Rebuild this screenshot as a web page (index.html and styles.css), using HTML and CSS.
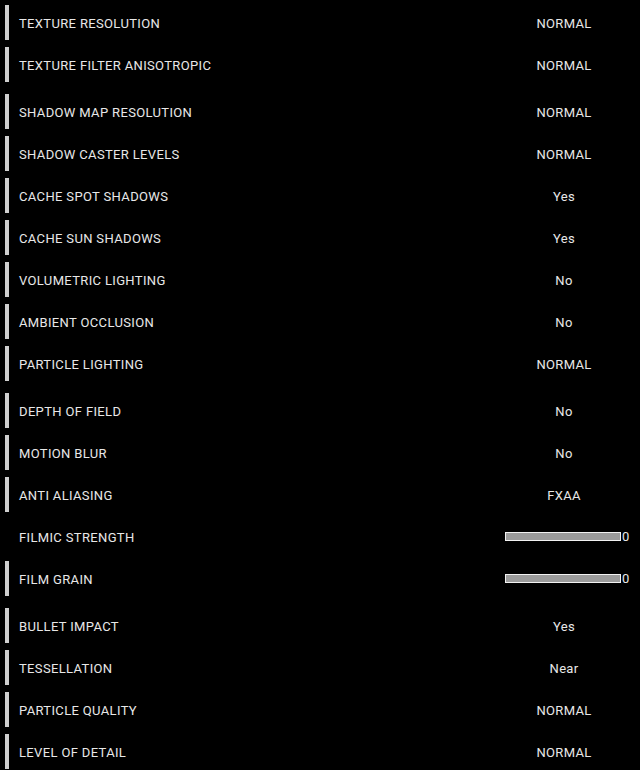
FILE: index.html
```html
<!DOCTYPE html>
<html lang="en">

<head>
	<meta charset="UTF-8">
	<meta name="viewport" content="width=device-width, initial-scale=1.0">
	<title>Graphics Settings</title>
	<link rel="stylesheet" href="styles.css">
</head>

<body>
	<div class="settings">
		<div class="row"><span class="label">TEXTURE RESOLUTION</span><span class="value">NORMAL</span></div>
		<div class="row"><span class="label">TEXTURE FILTER ANISOTROPIC</span><span class="value">NORMAL</span></div>
		<div class="row group"><span class="label">SHADOW MAP RESOLUTION</span><span class="value">NORMAL</span></div>
		<div class="row"><span class="label">SHADOW CASTER LEVELS</span><span class="value">NORMAL</span></div>
		<div class="row"><span class="label">CACHE SPOT SHADOWS</span><span class="value">Yes</span></div>
		<div class="row"><span class="label">CACHE SUN SHADOWS</span><span class="value">Yes</span></div>
		<div class="row"><span class="label">VOLUMETRIC LIGHTING</span><span class="value">No</span></div>
		<div class="row"><span class="label">AMBIENT OCCLUSION</span><span class="value">No</span></div>
		<div class="row"><span class="label">PARTICLE LIGHTING</span><span class="value">NORMAL</span></div>
		<div class="row group"><span class="label">DEPTH OF FIELD</span><span class="value">No</span></div>
		<div class="row"><span class="label">MOTION BLUR</span><span class="value">No</span></div>
		<div class="row"><span class="label">ANTI ALIASING</span><span class="value">FXAA</span></div>
		<div class="row no-mark"><span class="label">FILMIC STRENGTH</span>
			<span class="value slider-cell"><span class="slider"></span><span class="slider-num">0</span></span>
		</div>
		<div class="row"><span class="label">FILM GRAIN</span>
			<span class="value slider-cell"><span class="slider"></span><span class="slider-num">0</span></span>
		</div>
		<div class="row group"><span class="label">BULLET IMPACT</span><span class="value">Yes</span></div>
		<div class="row"><span class="label">TESSELLATION</span><span class="value">Near</span></div>
		<div class="row"><span class="label">PARTICLE QUALITY</span><span class="value">NORMAL</span></div>
		<div class="row"><span class="label">LEVEL OF DETAIL</span><span class="value">NORMAL</span></div>
	</div>
</body>

</html>
```

FILE: styles.css
```css
* {
	margin: 0;
	padding: 0;
	box-sizing: border-box;
}

html,
body {
	background: #000;
	height: 100%;
	overflow: hidden;
}

body {
	font-family: Roboto, 'Liberation Sans', sans-serif;
	font-size: 13px;
	color: #e8e8e8;
}

.settings {
	display: flex;
	flex-direction: column;
	gap: 7px;
	padding: 5px 16px 0 5px;
}

.row {
	display: flex;
	align-items: center;
	height: 35px;
	border-left: 4px solid #cfcfcf;
	padding-left: 10px;
}

.row.no-mark {
	border-left-color: transparent;
}

.row.group {
	margin-top: 5px;
}

.label {
	flex: 1;
	letter-spacing: 0.35px;
	padding-top: 1px;
}

.value {
	width: 120px;
	text-align: center;
	letter-spacing: 0.3px;
	padding-top: 1px;
}

.slider-cell {
	display: flex;
	align-items: center;
	padding-left: 1px;
	padding-top: 0;
}

.slider {
	display: block;
	flex-shrink: 0;
	width: 116px;
	height: 9px;
	background: #9b9b9b;
	border: 1px solid #f2f2f2;
}

.slider-num {
	flex-shrink: 0;
	margin-left: 1px;
	letter-spacing: 0;
}
```
